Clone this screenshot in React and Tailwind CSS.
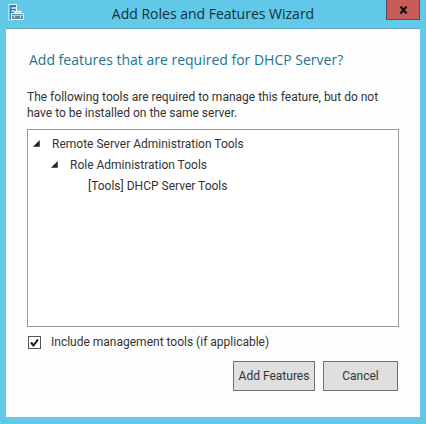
import { useState } from "react";

function ServerIcon() {
  return (
    <svg width="18" height="18" viewBox="0 0 18 18" aria-hidden="true">
      <path d="M2 0.5h7.5v7.5h-2v3h-2v5H2z" fill="#2c7fb8" stroke="#e4f5fb" />
      <path d="M4.5 4h5M4.5 7h3" stroke="#e4f5fb" strokeWidth="1.5" />
      <path d="M8.5 9V7.5h5V9" fill="none" stroke="#f2f7f9" strokeWidth="1.5" />
      <rect x="4.5" y="9.5" width="12" height="6" fill="#5f86a2" stroke="#f2f7f9" />
      <path d="M5 11.5h11" stroke="#b9cedb" />
      <path d="M7.5 12v2M13.5 12v2" stroke="#dfe9ee" />
    </svg>
  );
}

function Arrow() {
  return (
    <svg width="7" height="7" viewBox="0 0 7 7" aria-hidden="true">
      <path d="M6.5 0.5v6h-6z" fill="#222" stroke="#222" strokeWidth="0.5" />
    </svg>
  );
}

export default function App() {
  const [open, setOpen] = useState(true);
  const [roleOpen, setRoleOpen] = useState(true);
  const [include, setInclude] = useState(true);

  return (
    <div className="flex min-h-screen flex-col bg-[#62c9e8] px-[6px] pb-[7px] font-[Roboto,sans-serif] text-xs text-[#333]">
      <header className="grid h-7 grid-cols-[34px_1fr_34px] items-start">
        <div className="pt-1 pl-px">
          <ServerIcon />
        </div>
        <h1 className="text-center font-['Open_Sans',sans-serif] text-sm leading-7 text-[#12303c]">
          Add Roles and Features Wizard
        </h1>
        <button
          aria-label="Close"
          className="flex h-5 items-center justify-center border border-t-0 border-[#684850] bg-[#c75c58]"
        >
          <svg width="9" height="8" viewBox="0 0 9 8" aria-hidden="true">
            <path d="M1.5 0.5l6 7M7.5 0.5l-6 7" stroke="#111" strokeWidth="2.2" />
          </svg>
        </button>
      </header>

      <main className="flex flex-1 flex-col border-t border-[#68a9bf] bg-[#fdfdfd] px-[21px] pt-5 pb-[26px]">
        <h2 className="pl-[2px] font-['Open_Sans',sans-serif] text-sm leading-[22px] text-[#1c7590]">
          Add features that are required for DHCP Server?
        </h2>
        <p className="mt-[18px] leading-4">
          The following tools are required to manage this feature, but do not have to be installed on the same server.
        </p>

        <ul className="mt-2 flex-1 border border-[#999] bg-white pt-[3px]">
          <li>
            <button
              onClick={() => setOpen(!open)}
              aria-expanded={open}
              className="flex h-[21px] items-center gap-3 pl-[5px]"
            >
              <Arrow />
              Remote Server Administration Tools
            </button>
            {open && (
              <ul>
                <li>
                  <button
                    onClick={() => setRoleOpen(!roleOpen)}
                    aria-expanded={roleOpen}
                    className="flex h-[21px] items-center gap-3 pl-[23px]"
                  >
                    <Arrow />
                    Role Administration Tools
                  </button>
                  {roleOpen && (
                    <ul>
                      <li className="flex h-[21px] items-center pl-[60px]">[Tools] DHCP Server Tools</li>
                    </ul>
                  )}
                </li>
              </ul>
            )}
          </li>
        </ul>

        <label className="mt-[7px] flex items-center gap-[10px] self-start pl-px leading-4">
          <span className="grid">
            <input
              type="checkbox"
              checked={include}
              onChange={(e) => setInclude(e.target.checked)}
              className="peer col-start-1 row-start-1 size-[13px] appearance-none border border-[#555] bg-white"
            />
            <svg
              className="pointer-events-none invisible col-start-1 row-start-1 peer-checked:visible"
              width="13"
              height="13"
              viewBox="0 0 13 13"
              aria-hidden="true"
            >
              <path d="M3 6.5l2.5 3L10 3.5" fill="none" stroke="#111" strokeWidth="2" />
            </svg>
          </span>
          Include management tools (if applicable)
        </label>

        <div className="mt-[11px] flex justify-end gap-2 pr-px">
          <button className="h-[30px] w-[82px] border border-[#707070] bg-[#dfdfdf] whitespace-nowrap">
            Add Features
          </button>
          <button className="h-[30px] w-[75px] border border-[#707070] bg-[#dfdfdf]">Cancel</button>
        </div>
      </main>
    </div>
  );
}
